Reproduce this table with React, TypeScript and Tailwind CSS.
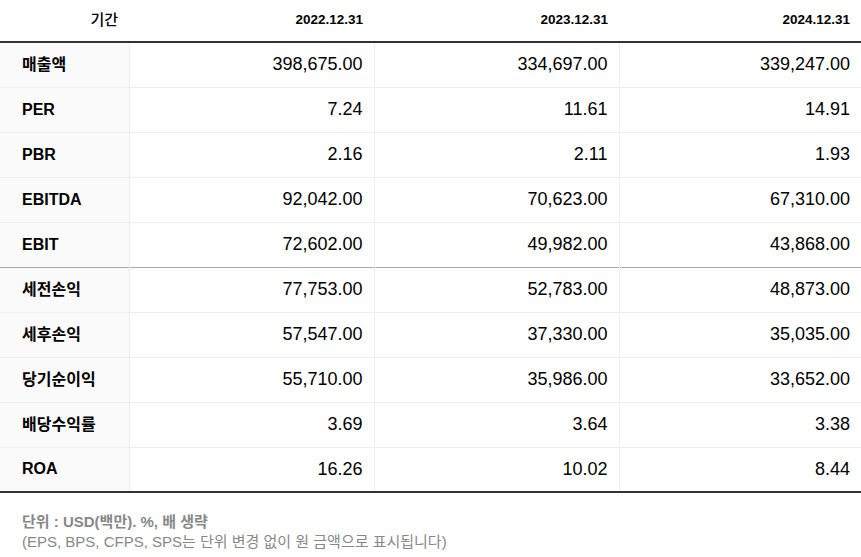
import React from 'react';

interface Row {
  label: string;
  values: string[];
  divider?: boolean;
}

const periods = ['2022.12.31', '2023.12.31', '2024.12.31'];

const rows: Row[] = [
  { label: '매출액', values: ['398,675.00', '334,697.00', '339,247.00'] },
  { label: 'PER', values: ['7.24', '11.61', '14.91'] },
  { label: 'PBR', values: ['2.16', '2.11', '1.93'] },
  { label: 'EBITDA', values: ['92,042.00', '70,623.00', '67,310.00'] },
  { label: 'EBIT', values: ['72,602.00', '49,982.00', '43,868.00'], divider: true },
  { label: '세전손익', values: ['77,753.00', '52,783.00', '48,873.00'] },
  { label: '세후손익', values: ['57,547.00', '37,330.00', '35,035.00'] },
  { label: '당기순이익', values: ['55,710.00', '35,986.00', '33,652.00'] },
  { label: '배당수익률', values: ['3.69', '3.64', '3.38'] },
  { label: 'ROA', values: ['16.26', '10.02', '8.44'] },
];

export default function App() {
  return (
    <div
      className="w-[861px] h-[557px] bg-white text-black overflow-hidden"
      style={{ fontFamily: '"Liberation Sans", Arial, "Noto Sans CJK KR", sans-serif' }}
    >
      <table className="w-full table-fixed border-collapse">
        <colgroup>
          <col className="w-[129px]" />
          <col className="w-[245px]" />
          <col className="w-[245px]" />
          <col />
        </colgroup>
        <thead>
          <tr className="h-[42px] border-b-2 border-[#333]">
            <th className="pr-[11px] text-right text-[15px] font-medium">기간</th>
            {periods.map(p => (
              <th key={p} className="pr-[11px] text-right text-[13.5px] font-bold">{p}</th>
            ))}
          </tr>
        </thead>
        <tbody>
          {rows.map((r, idx) => {
            const last = idx === rows.length - 1;
            const border = last
              ? 'border-b-2 border-[#333]'
              : r.divider
              ? 'border-b border-[#aaa]'
              : 'border-b border-[#eee]';
            return (
              <tr key={r.label} className={`h-[45px] ${border}`}>
                <td className="pl-[22px] bg-[#fafafa] border-r border-[#eee] text-[16px] font-bold">
                  {r.label}
                </td>
                {r.values.map((v, i) => (
                  <td
                    key={i}
                    className={`pr-[11px] text-right text-[18px] ${i < 2 ? 'border-r border-[#eee]' : ''}`}
                  >
                    {v}
                  </td>
                ))}
              </tr>
            );
          })}
        </tbody>
      </table>

      {/* 단위 안내 */}
      <div className="mt-[19px] pl-[22px] text-[15px] leading-[20px] text-[#888]">
        <p className="font-bold">단위 : USD(백만). %, 배 생략</p>
        <p>(EPS, BPS, CFPS, SPS는 단위 변경 없이 원 금액으로 표시됩니다)</p>
      </div>
    </div>
  );
}
